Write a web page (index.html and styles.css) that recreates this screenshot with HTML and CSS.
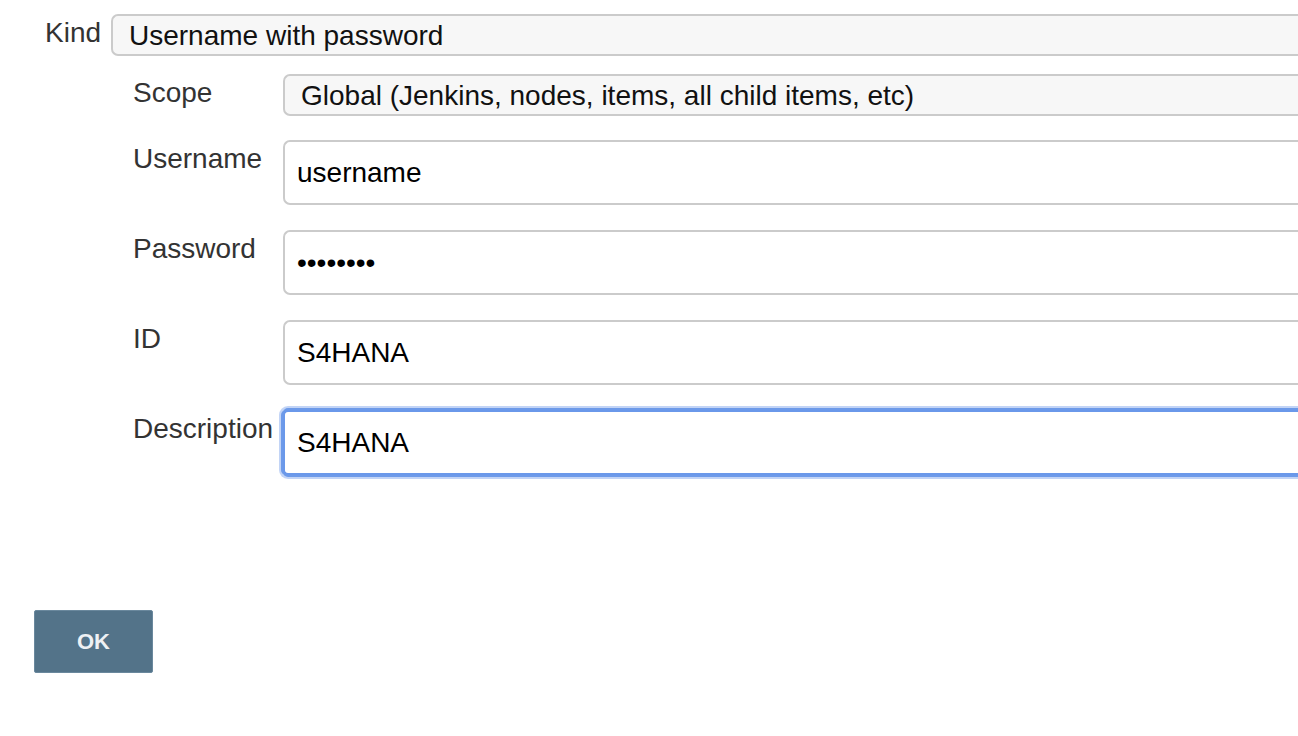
FILE: index.html
```html
<!DOCTYPE html>
<html>
<head>
<meta charset="utf-8">
<link rel="stylesheet" href="styles.css">
</head>
<body>
<div class="page">
  <div class="row kind-row">
    <label class="lbl kind-lbl">Kind</label>
    <select class="select"><option>Username with password</option></select>
  </div>
  <div class="sub">
    <div class="row scope-row">
      <label class="lbl sub-lbl">Scope</label>
      <select class="select"><option>Global (Jenkins, nodes, items, all child items, etc)</option></select>
    </div>
    <div class="row field-row">
      <label class="lbl sub-lbl">Username</label>
      <input class="input" type="text" value="username">
    </div>
    <div class="row field-row">
      <label class="lbl sub-lbl">Password</label>
      <input class="input" type="password" value="password">
    </div>
    <div class="row field-row">
      <label class="lbl sub-lbl">ID</label>
      <input class="input" type="text" value="S4HANA">
    </div>
    <div class="row field-row">
      <label class="lbl sub-lbl">Description</label>
      <input class="input focused" type="text" value="S4HANA">
    </div>
  </div>
  <div class="actions">
    <button class="ok">OK</button>
  </div>
</div>
</body>
</html>
```
FILE: styles.css
```css
html, body {
  margin: 0;
  padding: 0;
  background: #fff;
}
body {
  font-family: "Liberation Sans", Arial, sans-serif;
  font-size: 28px;
  color: #333;
}
.page {
  padding-top: 14px;
}
.row {
  display: flex;
  align-items: flex-start;
}
.lbl {
  font-size: 28px;
  line-height: 30px;
  padding-top: 4px;
  color: #333;
  white-space: nowrap;
}
.kind-row {
  padding-left: 45px;
}
.kind-lbl {
  width: 66px;
  flex: none;
}
.select {
  appearance: none;
  -webkit-appearance: none;
  flex: 1;
  min-width: 0;
  height: 42px;
  box-sizing: border-box;
  border: 2px solid #cbcbcb;
  border-right: none;
  border-radius: 7px 0 0 7px;
  background: #f7f7f7;
  font-family: "Liberation Sans", Arial, sans-serif;
  font-size: 28px;
  color: #111;
  padding: 0 16px;
  margin: 0;
  outline: none;
}
.sub {
  padding-left: 133px;
}
.sub-lbl {
  width: 150px;
  flex: none;
}
.scope-row {
  margin-top: 18px;
}
.field-row {
  margin-top: 24px;
}
.field-row + .field-row {
  margin-top: 25px;
}
.input {
  flex: 1;
  min-width: 0;
  height: 65px;
  box-sizing: border-box;
  border: 2px solid #cbcbcb;
  border-right: none;
  border-radius: 7px 0 0 7px;
  background: #fff;
  font-family: "Liberation Sans", Arial, sans-serif;
  font-size: 28px;
  color: #000;
  padding: 0 12px;
  margin: 0;
  outline: none;
}
.input.focused {
  border: 2px solid #6a98ea;
  border-right: none;
  border-radius: 5px 0 0 5px;
  box-shadow: -2px 0 0 0 #6d9ae9, 0 -2px 0 0 #6d9ae9, 0 2px 0 0 #6d9ae9, 0 0 0 4px rgba(120, 160, 235, 0.45);
  clip-path: inset(-6px 0 -6px -6px);
}
.actions {
  padding-left: 34px;
  margin-top: 135px;
}
.ok {
  width: 119px;
  height: 63px;
  box-sizing: border-box;
  background: #537389;
  border: 1px solid #6a889d;
  border-radius: 2px;
  color: #eef1f4;
  font-family: "Liberation Sans", Arial, sans-serif;
  font-weight: bold;
  font-size: 22px;
  padding: 0;
}
```
